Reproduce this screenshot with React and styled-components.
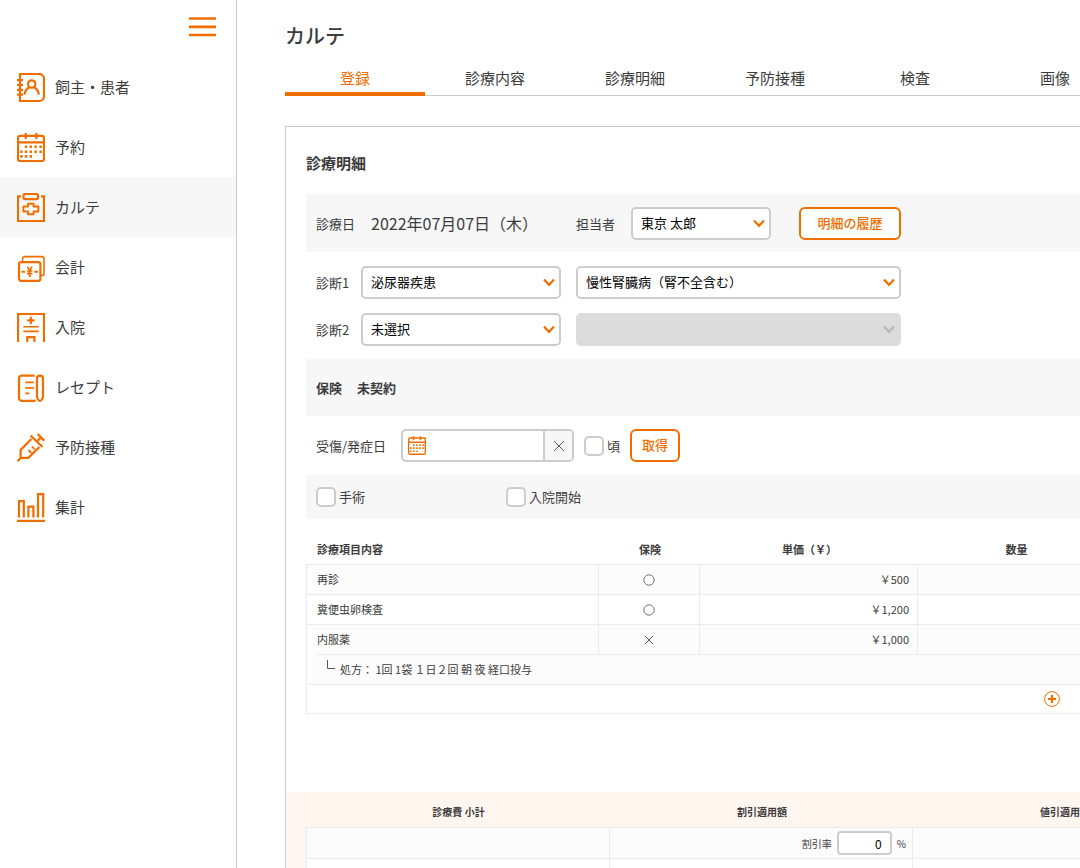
import React from "react";
import styled, { createGlobalStyle, css } from "styled-components";

const ORANGE = "#f06e00";
const GRAY = "#cccccc";
const LINE = "#ebebeb";

const GlobalStyle = createGlobalStyle`
  * { box-sizing: border-box; }
  body {
    margin: 0;
    background: #fff;
    color: #3c3c3c;
    font-family: "Noto Sans CJK JP", "Noto Sans", sans-serif;
    font-size: 13px;
  }
  button, input, select { font: inherit; }
`;

const Shell = styled.div`
  display: flex;
  height: 100vh;
`;

const Sidebar = styled.aside`
  flex: 0 0 237px;
  border-right: 1px solid ${GRAY};
`;

const SidebarTop = styled.div`
  display: flex;
  justify-content: flex-end;
  height: 57px;
  padding: 16px 20px 0 0;
`;

const MenuButton = styled.button`
  width: 28px;
  height: 22px;
  padding: 0;
  border: 0;
  background: none;
  cursor: pointer;
`;

const NavItem = styled.a`
  display: flex;
  align-items: center;
  gap: 10px;
  height: 60px;
  padding-left: 17px;
  font-size: 15px;
  color: inherit;
  text-decoration: none;
  background: ${(p) => (p.$active ? "#f7f7f7" : "transparent")};
`;

const NavLabel = styled.span`
  padding-bottom: 2px;
`;

const Icon = styled.svg`
  display: block;
  flex: none;
  fill: none;
  stroke: ${(p) => p.$color || ORANGE};
  stroke-width: ${(p) => p.$weight || 2.2};
`;

const Main = styled.main`
  flex: 1;
  min-width: 0;
  padding-left: 48px;
  overflow: auto;
  scrollbar-width: none;
`;

const Content = styled.div`
  min-width: 1534px;
`;

const PageTitle = styled.h1`
  margin: 0;
  padding-top: 22px;
  font-size: 20px;
  font-weight: 500;
  line-height: 28px;
`;

const Tabs = styled.nav`
  display: flex;
  height: 34px;
  margin: 12px 0 30px;
  border-bottom: 1px solid ${GRAY};
`;

const Tab = styled.a`
  width: 140px;
  height: 34px;
  font-size: 15px;
  line-height: 32px;
  text-align: center;
  text-decoration: none;
  color: ${(p) => (p.$active ? ORANGE : "inherit")};
  border-bottom: 4px solid ${(p) => (p.$active ? ORANGE : "transparent")};
`;

const Panel = styled.section`
  border: 1px solid ${GRAY};
`;

const PanelBody = styled.div`
  padding: 0 20px 78px;
`;

const Heading = styled.h2`
  margin: 0;
  padding: 25px 0 20px;
  font-size: 15px;
  font-weight: 700;
  line-height: 22px;
`;

const Row = styled.div`
  display: flex;
  align-items: center;
  height: ${(p) => p.$height}px;
  padding: 0 10px;
  background: ${(p) => (p.$shaded ? "#f7f7f7" : "transparent")};
  font-weight: ${(p) => (p.$bold ? 700 : 400)};
  gap: ${(p) => p.$gap || 0}px;
`;

const Diagnoses = styled.div`
  display: grid;
  grid-template-columns: 30px 200px 325px;
  column-gap: 15px;
  row-gap: 14px;
  align-items: center;
  padding: 14px 10px 13px;
`;

const FieldLabel = styled.label`
  white-space: nowrap;
`;

const Group = styled.div`
  display: flex;
  align-items: center;
  gap: ${(p) => p.$gap}px;
`;

const VisitDate = styled.span`
  width: 189px;
  font-size: 16px;
`;

const SelectBox = styled.div`
  position: relative;
  width: ${(p) => (p.$width ? p.$width + "px" : "100%")};
  svg {
    position: absolute;
    right: 6px;
    top: 12px;
    pointer-events: none;
  }
`;

const StyledSelect = styled.select`
  display: block;
  width: 100%;
  height: 33px;
  padding: 0 28px 2px 8px;
  appearance: none;
  border: 2px solid ${GRAY};
  border-radius: 5px;
  background: #fff;
  color: #000;
  &:disabled {
    border-color: #dcdcdc;
    background: #dcdcdc;
    opacity: 1;
  }
`;

const OutlineButton = styled.button`
  width: ${(p) => p.$width}px;
  height: 33px;
  padding: 0 0 2px;
  border: 2px solid ${ORANGE};
  border-radius: 6px;
  background: #fff;
  color: ${ORANGE};
  font-weight: 500;
  cursor: pointer;
`;

const DateField = styled.div`
  display: flex;
  align-items: center;
  width: 173px;
  height: 33px;
  border: 2px solid ${GRAY};
  border-radius: 5px;
  background: #fff;
  overflow: hidden;
  > svg { margin-left: 5px; }
`;

const DateInput = styled.input`
  flex: 1;
  min-width: 0;
  height: 100%;
  padding: 0 6px;
  border: 0;
  outline: 0;
  background: none;
`;

const ClearButton = styled.button`
  display: flex;
  align-items: center;
  justify-content: center;
  width: 29px;
  height: 100%;
  padding: 0;
  border: 0;
  border-left: 2px solid ${GRAY};
  background: #f7f7f7;
`;

const CheckLabel = styled.label`
  display: flex;
  align-items: center;
  gap: 3px;
  width: ${(p) => (p.$width ? p.$width + "px" : "auto")};
  line-height: 18px;
`;

const CheckBox = styled.input.attrs({ type: "checkbox" })`
  appearance: none;
  width: 20px;
  height: 20px;
  margin: 0;
  border: 2px solid ${GRAY};
  border-radius: 5px;
  background: #fff;
  &:checked { background: ${ORANGE}; }
`;

const Table = styled.table`
  table-layout: fixed;
  width: ${(p) => p.$width}px;
  border-collapse: separate;
  border-spacing: 0;
  font-size: ${(p) => p.$size}px;
`;

const Th = styled.th`
  height: ${(p) => p.$height}px;
  padding: ${(p) => (p.$align === "left" ? "0 8px 2px 11px" : "0 8px 2px 9px")};
  border-bottom: 1px solid ${LINE};
  font-weight: 700;
  text-align: ${(p) => p.$align || "center"};
  white-space: nowrap;
`;

const Td = styled.td`
  height: ${(p) => p.$height || 30}px;
  padding: ${(p) => (p.$align === "center" ? "0 9px" : "0 8px 2px 10px")};
  border: solid ${LINE};
  border-width: 0 1px 1px 0;
  background-color: ${(p) => (p.$shaded ? "#fcfcfc" : "#fff")};
  text-align: ${(p) => p.$align || "left"};
  white-space: nowrap;
  &:first-child { border-left-width: 1px; }
  ${(p) =>
    p.$insetLine &&
    css`
      border-bottom: 0;
      background-image: linear-gradient(${LINE}, ${LINE});
      background-position: 9px 100%;
      background-size: 100% 1px;
      background-repeat: no-repeat;
    `}
`;

const ItemsTable = styled(Table)`
  margin-top: 16px;
`;

const Mark = styled.svg`
  display: block;
  flex: none;
  fill: none;
  stroke: #555;
  stroke-width: 1;
`;

const CellMark = styled(Mark)`
  margin: 0 auto;
`;

const Note = styled.div`
  display: flex;
  gap: 5px;
  padding-left: 10px;
  line-height: 18px;
`;

const AddButton = styled.button`
  display: block;
  width: 16px;
  height: 16px;
  margin: 0 auto;
  padding: 0;
  border: 0;
  background: none;
`;

const Summary = styled.div`
  padding: 5px 20px 40px;
  background: #fff6f0;
`;

const RateLabel = styled.label`
  display: flex;
  align-items: center;
  justify-content: flex-end;
  gap: 5px;
  margin-right: -3px;
`;

const RateInput = styled.input`
  width: 55px;
  height: 24px;
  padding: 0 8px 0 4px;
  border: 2px solid ${GRAY};
  border-radius: 4px;
  color: #000;
  font-size: 12px;
  text-align: right;
`;

const Book = () => (
  <>
    <path d="M3 1H22a5 5 0 0 1 5 5V23a5 5 0 0 1-5 5H3Z" />
    <path d="M0 7.2H6M0 12H6M0 16.8H6M0 21.6H6" />
    <circle cx="14.7" cy="11" r="3.7" />
    <path d="M7.6 21.6C7.8 17.6 9.8 15.6 12.4 14.2M21.8 21.6C21.6 17.6 19.6 15.6 17 14.2" />
  </>
);

const Calendar = () => (
  <>
    <rect x="1" y="2.8" width="26" height="25.2" rx="2" />
    <path d="M1 9.4H27M8.7 0V6M19.4 0V6" />
    <path
      strokeWidth="2.6"
      d="M7.8 13.8h2.4M12.6 13.8h2.4M17.4 13.8h2.4M22.4 13.8h2.4M3.2 18.7h2.4M7.8 18.7h2.4M12.6 18.7h2.4M17.4 18.7h2.4M22.4 18.7h2.4M3.2 23.4h2.4M7.8 23.4h2.4M12.6 23.4h2.4"
    />
  </>
);

const Chart = () => (
  <>
    <path d="M4 3.4H1V28H27V3.4H24" />
    <rect x="6.5" y="1" width="14.6" height="5.2" rx="1.6" />
    <path
      strokeWidth="1.9"
      strokeLinejoin="round"
      d="M11 10.7H16.6V13.5H21.4V18.5H16.6V21.2H11V18.5H6.4V13.5H11Z"
    />
  </>
);

const Bills = () => (
  <>
    <rect x="2" y="9.2" width="21.4" height="18.6" rx="2" />
    <path strokeWidth="1.6" d="M5.6 9V5.6a2 2 0 0 1 2-2H25a2 2 0 0 1 2 2V20.4a2 2 0 0 1-2 2H23.4" />
    <path strokeWidth="2" d="M4.4 18.7H8M17.4 18.7H21M12.7 18V24" />
    <path strokeWidth="1.6" d="M10.4 13.6L12.7 17.6L15 13.6M10 18H15.4M10 20.6H15.4" />
  </>
);

const Hospital = () => (
  <>
    <path d="M1 29V1H27V29" />
    <path d="M13.8 3.8V11M10.2 7.4H17.4M10.3 29V24.2H17.4V29" />
    <path strokeWidth="1.6" d="M6.3 13.7H21.7M6.3 18.4H21.7" />
  </>
);

const Receipt = () => (
  <>
    <path d="M17.6 2.6H4.6A2.6 2.6 0 0 0 2 5.2V25.2A2.6 2.6 0 0 0 4.6 27.8H18.6" />
    <path strokeWidth="1.8" d="M8.3 9.4H16.8M8.3 14.8H16.8M8.3 20.3H12.4" />
    <path d="M20 5.6C20 1.6 26 1.6 26 5.6V23.4C25.8 25.6 24.4 27.8 23 27.8C21.6 27.8 20.2 25.6 20 23.4Z" />
  </>
);

const Syringe = () => (
  <>
    <path d="M.7 28.2L4 24.6M14.4 6L3.6 17V24.8H11.4L22.4 14" />
    <path d="M13.6 2.6L25.6 14M20.6 1L27.2 7.6M24 4.4L20 8.4" />
    <path strokeWidth="1.8" d="M11.4 17L14.4 20M14.8 13.4L17.8 16.4" />
  </>
);

const Bars = () => (
  <path d="M0 27.8H28M2 24.6V8.2H6.8V24.6M11.4 24.6V13.6H16.4V24.6M21 24.6V1.2H26.2V24.6" />
);

const navItems = [
  ["飼主・患者", Book],
  ["予約", Calendar],
  ["カルテ", Chart],
  ["会計", Bills],
  ["入院", Hospital],
  ["レセプト", Receipt],
  ["予防接種", Syringe],
  ["集計", Bars],
];

const tabs = ["登録", "診療内容", "診療明細", "予防接種", "検査", "画像"];

const items = [
  { name: "再診", covered: true, price: "￥500" },
  { name: "糞便虫卵検査", covered: true, price: "￥1,200" },
  { name: "内服薬", covered: false, price: "￥1,000", hasNote: true },
];

function Select({ id, width, value, disabled, label }) {
  return (
    <SelectBox $width={width}>
      <StyledSelect id={id} disabled={disabled} aria-label={label}>
        <option>{value}</option>
      </StyledSelect>
      <Icon width="12" height="9" viewBox="0 0 12 9" $color={disabled ? "#b8b8b8" : ORANGE}>
        <path d="M1 1.5L6 6.8L11 1.5" />
      </Icon>
    </SelectBox>
  );
}

function CoverageMark({ covered }) {
  return (
    <CellMark width="12" height="12" viewBox="0 0 12 12" role="img" aria-label={covered ? "対象" : "対象外"}>
      {covered ? <circle cx="6" cy="6" r="5.2" strokeWidth="0.8" /> : <path d="M2 2L10 10M10 2L2 10" />}
    </CellMark>
  );
}

export default function App() {
  return (
    <Shell>
      <GlobalStyle />
      <Sidebar>
        <SidebarTop>
          <MenuButton aria-label="メニュー">
            <Icon width="28" height="22" viewBox="0 0 28 22" $weight={2.7}>
              <path d="M1 2.5H28M1 10.8H28M1 19H28" />
            </Icon>
          </MenuButton>
        </SidebarTop>
        <nav>
          {navItems.map(([label, Glyph]) => (
            <NavItem key={label} href="#" $active={label === "カルテ"}>
              <Icon width="28" height="29" viewBox="0 0 28 29">
                <Glyph />
              </Icon>
              <NavLabel>{label}</NavLabel>
            </NavItem>
          ))}
        </nav>
      </Sidebar>

      <Main>
        <Content>
          <PageTitle>カルテ</PageTitle>
          <Tabs>
            {tabs.map((t, i) => (
              <Tab key={t} href="#" $active={i === 0}>
                {t}
              </Tab>
            ))}
          </Tabs>

          <Panel>
            <PanelBody>
              <Heading>診療明細</Heading>

              <Row $height={58} $shaded $gap={16}>
                <span>診療日</span>
                <VisitDate>2022年07月07日（木）</VisitDate>
                <Group $gap={28}>
                  <Group $gap={16}>
                    <FieldLabel htmlFor="staff">担当者</FieldLabel>
                    <Select id="staff" width={140} value="東京 太郎" />
                  </Group>
                  <OutlineButton $width={102}>明細の履歴</OutlineButton>
                </Group>
              </Row>

              <Diagnoses>
                <FieldLabel htmlFor="diag1">診断1</FieldLabel>
                <Select id="diag1" value="泌尿器疾患" />
                <Select value="慢性腎臓病（腎不全含む）" label="診断1 詳細" />
                <FieldLabel htmlFor="diag2">診断2</FieldLabel>
                <Select id="diag2" value="未選択" />
                <Select value="" disabled label="診断2 詳細" />
              </Diagnoses>

              <Row $height={57} $shaded $bold $gap={15}>
                <span>保険</span>
                <span>未契約</span>
              </Row>

              <Row $height={59} $gap={10}>
                <Group $gap={15}>
                  <FieldLabel htmlFor="onset">受傷/発症日</FieldLabel>
                  <DateField>
                    <Icon width="18" height="19" viewBox="0 0 28 29">
                      <Calendar />
                    </Icon>
                    <DateInput id="onset" type="text" />
                    <ClearButton aria-label="クリア">
                      <Mark width="12" height="12" viewBox="0 0 12 12">
                        <path d="M1 1L11 11M11 1L1 11" />
                      </Mark>
                    </ClearButton>
                  </DateField>
                </Group>
                <CheckLabel>
                  <CheckBox />頃
                </CheckLabel>
                <OutlineButton $width={50}>取得</OutlineButton>
              </Row>

              <Row $height={44} $shaded>
                <CheckLabel $width={190}>
                  <CheckBox />手術
                </CheckLabel>
                <CheckLabel>
                  <CheckBox />入院開始
                </CheckLabel>
              </Row>

              <ItemsTable $width={1492} $size={11}>
                <colgroup>
                  <col width="293" />
                  <col width="101" />
                  <col width="218" />
                  <col width="196" />
                  <col />
                </colgroup>
                <thead>
                  <tr>
                    <Th $height={30} $align="left">診療項目内容</Th>
                    <Th $height={30}>保険</Th>
                    <Th $height={30}>単価（￥）</Th>
                    <Th $height={30}>数量</Th>
                    <Th $height={30} />
                  </tr>
                </thead>
                <tbody>
                  {items.map((item, i) => (
                    <tr key={item.name}>
                      <Td $shaded={i % 2 === 0} $insetLine={item.hasNote}>{item.name}</Td>
                      <Td $shaded={i % 2 === 0} $align="center">
                        <CoverageMark covered={item.covered} />
                      </Td>
                      <Td $shaded={i % 2 === 0} $align="right">{item.price}</Td>
                      <Td $shaded={i % 2 === 0} />
                      <Td $shaded={i % 2 === 0} />
                    </tr>
                  ))}
                  <tr>
                    <Td $shaded colSpan={5}>
                      <Note>
                        <Mark width="8" height="9" viewBox="0 0 8 9">
                          <path d="M.5 0V8.5H8" />
                        </Mark>
                        <span>処方： 1回 1袋 １日２回 朝 夜 経口投与</span>
                      </Note>
                    </Td>
                  </tr>
                  <tr>
                    <Td $height={29} $align="center" colSpan={5}>
                      <AddButton aria-label="追加">
                        <Icon width="16" height="16" viewBox="0 0 16 16">
                          <circle cx="8" cy="8" r="7.4" strokeWidth="1" />
                          <path d="M8 4V12M4 8H12" />
                        </Icon>
                      </AddButton>
                    </Td>
                  </tr>
                </tbody>
              </ItemsTable>
            </PanelBody>

            <Summary>
              <Table $width={1492} $size={10}>
                <colgroup>
                  <col width="304" />
                  <col width="303" />
                  <col width="303" />
                  <col />
                </colgroup>
                <thead>
                  <tr>
                    <Th $height={31}>診療費 小計</Th>
                    <Th $height={31}>割引適用額</Th>
                    <Th $height={31}>値引適用額</Th>
                    <Th $height={31} />
                  </tr>
                </thead>
                <tbody>
                  <tr>
                    <Td $height={31} $shaded />
                    <Td $height={31} $shaded $align="center">
                      <RateLabel>
                        割引率
                        <RateInput type="text" defaultValue="0" />%
                      </RateLabel>
                    </Td>
                    <Td $height={31} $shaded />
                    <Td $height={31} $shaded />
                  </tr>
                  <tr>
                    <Td $height={31} />
                    <Td $height={31} />
                    <Td $height={31} />
                    <Td $height={31} />
                  </tr>
                </tbody>
              </Table>
            </Summary>
          </Panel>
        </Content>
      </Main>
    </Shell>
  );
}
